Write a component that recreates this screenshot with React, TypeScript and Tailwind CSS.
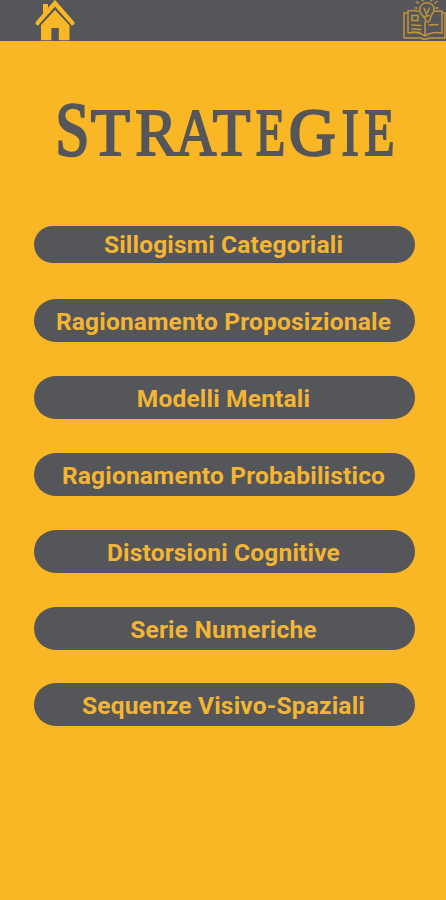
import clsx from "clsx";

const topics = [
  "Sillogismi Categoriali",
  "Ragionamento Proposizionale",
  "Modelli Mentali",
  "Ragionamento Probabilistico",
  "Distorsioni Cognitive",
  "Serie Numeriche",
  "Sequenze Visivo-Spaziali",
];

// the title is set in wide small caps, every letter has its own width
const titleLetters = [
  { letter: "S", className: "w-[28px] text-[77px] [-webkit-text-stroke:2.4px_#55565a]", scale: "scale-x-[0.8]" },
  { letter: "T", className: "ml-[4px] w-[40px] text-[67px] [-webkit-text-stroke:2px_#55565a]", scale: "scale-x-[0.96]" },
  { letter: "R", className: "ml-[5px] w-[43px] text-[67px] [-webkit-text-stroke:2px_#55565a]", scale: "scale-x-[0.94]" },
  { letter: "A", className: "-ml-[2px] w-[41px] text-[67px] [-webkit-text-stroke:2px_#55565a]", scale: "scale-x-[0.84]" },
  { letter: "T", className: "-ml-[5px] w-[39px] text-[67px] [-webkit-text-stroke:2px_#55565a]", scale: "scale-x-[0.92]" },
  { letter: "E", className: "ml-[5px] w-[29px] text-[67px] [-webkit-text-stroke:2px_#55565a]", scale: "scale-x-[0.72]" },
  { letter: "G", className: "ml-[4px] w-[46px] text-[67px] [-webkit-text-stroke:2.6px_#55565a]", scale: "scale-x-[0.96]" },
  { letter: "I", className: "ml-[7px] w-[16px] text-[67px] [-webkit-text-stroke:2px_#55565a]", scale: "scale-x-[0.78]" },
  { letter: "E", className: "ml-[6px] w-[30px] text-[67px] [-webkit-text-stroke:2px_#55565a]", scale: "scale-x-[0.74]" },
];

function HomeIcon() {
  return <svg width="42" height="41" viewBox="0 0 42 41" fill="none">
    <path d="M9 4h5v6l-5 5z" fill="#f9b625" />
    <path d="M3.8 23 21 3.2 38.2 23" stroke="#f9b625" strokeWidth="4.4" strokeLinecap="round" />
    <path d="M21 9.8 35.5 25v15.2H24.8V28h-7.4v12.2H7V25z" fill="#f9b625" />
    <path d="M5.5 25 21 8.4 36.5 25" stroke="#55565a" strokeWidth="1.6" />
  </svg>;
}

function BookIcon() {
  return <svg width="43" height="41" viewBox="0 0 43 41" fill="none" stroke="#c0953a" strokeWidth="1.5" strokeLinecap="round">
    <path d="M22 36V22M5 33V11q5-1 10 0M5 33q10-2 17 3 7-5 17-3V11l-7 .2" />
    <path d="M4 13H1v25h17q4 2.500 8 0h16V13h-3" />
    <path d="M9 15.500h6v5H9zM9 25l9 .5M9 29l9 .5M9 32l8 .5M26 25l9-.5" />
    <path d="M18 14q-3-6 1-9.500 5-3.500 10 0 4 4 .5 9l-2 4q-1 6-4 4l-2-4zM20 17l6-1.500M21 8l2.500 6 3-6" />
    <path d="M15.500 3l-2-1M14 8h-2M32 3l2-1.500M33 8h2M20 1l-1-1M28 1l1-1" />
  </svg>;
}

export default function App() {
  return <div className="h-[900px] w-[446px] overflow-hidden bg-[#f9b625] text-[#55565a]">
    <header className="flex h-[41px] items-start justify-between bg-[#55565a] pl-[34px]">
      <button aria-label="Home"><HomeIcon /></button>
      <button aria-label="Strategie"><BookIcon /></button>
    </header>
    <h1 className="mt-12 flex h-[80px] items-baseline pl-[58px] font-['Liberation_Serif',serif] leading-[80px]">
      {titleLetters.map(({ letter, className, scale }, index) => <span key={index} className={clsx("flex shrink-0 justify-center leading-[80px]", className)}>
        <span className={scale}>{letter}</span>
      </span>)}
    </h1>
    <nav className="mt-[57px] flex flex-col gap-[33.8px] pl-[34px]">
      {topics.map((topic, index) => <button key={topic} className={clsx("w-[381px] whitespace-nowrap rounded-full bg-[#55565a] pr-[2px] font-['Roboto',sans-serif] text-[24.5px] font-bold tracking-[0.18px] text-[#f4b533]", index === 0 ? "mb-[2.6px] h-[37px] leading-[37px]" : "h-[43px] leading-[46px]")}>
        {topic}
      </button>)}
    </nav>
  </div>;
}
